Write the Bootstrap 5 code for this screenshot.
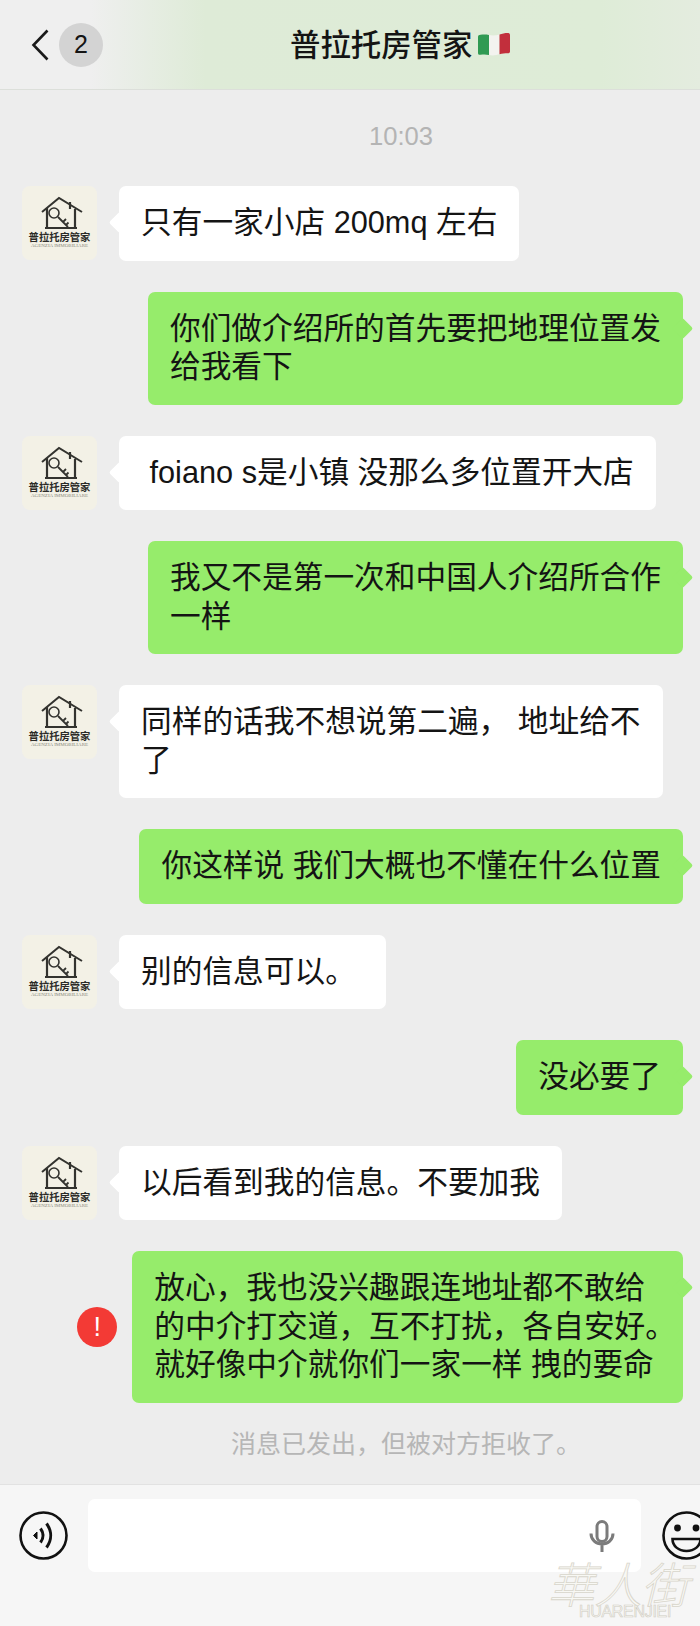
<!DOCTYPE html>
<html lang="zh">
<head>
<meta charset="UTF-8" />
<meta name="viewport" content="width=device-width, initial-scale=1.0" />
<title>普拉托房管家</title>
<link href="https://cdn.jsdelivr.net/npm/bootstrap@5.3.3/dist/css/bootstrap.min.css" rel="stylesheet" />
<style>
  html, body { height: 100%; overflow: hidden; background-color: #ededed; }
  body { font-family: "Liberation Sans", "Noto Sans CJK SC", sans-serif; color: #141414; }
  .phone { width: 700px; height: 1626px; overflow: hidden; }
  .top-bar {
    height: 90px; padding-left: 31px; flex: none;
    border-bottom: 1px solid #dcdfda;
    background: linear-gradient(90deg, #efefef 0, #efefef 90px, #deebd7 205px, #deecd7 600px, #e4ecdf 700px);
  }
  .back-count { width: 44px; height: 44px; background-color: #d3d3d3; font-size: 25px; margin-left: 10px; }
  .chat-title { font-size: 30.4px; line-height: 40px; font-weight: 500; margin-left: 187px; padding-top: 1px; }
  .flag-icon { width: 34px; height: 24px; margin-left: 5px; margin-top: -1px; }
  .chat-area { flex: 1 1 auto; min-height: 0; }
  .time-label { font-size: 25.6px; line-height: 30px; color: #b4b4b4; margin: 31px 0 35px; padding-left: 102px; }
  .msg-stack { display: flex; flex-direction: column; gap: 31px; padding: 0 17px 0 22px; }
  .head-pic { width: 75px; height: 74px; border-radius: 8px; background-color: #f3f1e6; flex: none; overflow: hidden; }
  .head-pic svg { display: block; margin: 10px 0 0 14px; }
  .head-name { font-size: 10.3px; line-height: 11px; font-weight: 700; color: #2b2b28; white-space: nowrap; margin-top: 2px; }
  .head-sub { font-family: "Liberation Serif", serif; font-size: 5px; line-height: 6px; color: #8a8a80; white-space: nowrap; }
  .bubble {
    position: relative; font-size: 30.7px; line-height: 38.5px;
    padding: 18px 22px; border-radius: 7px; white-space: nowrap;
  }
  .bubble::after {
    content: ""; position: absolute; top: 29px; width: 15px; height: 15px;
    background-color: inherit; transform: rotate(45deg); border-radius: 2px;
  }
  .bubble-in { background-color: #fff; margin-left: 22px; }
  .bubble-in::after { left: -7px; }
  .bubble-out { background-color: #96ec6b; }
  .bubble-out::after { right: -7px; }
  .hang-stop { margin-right: -15px; }
  .fail-dot {
    width: 40px; height: 40px; background-color: #f33a35; color: #fff; font-size: 27px; margin-right: 15px;
  }
  .sys-note { font-size: 25px; line-height: 30px; color: #b6b6b6; margin-top: 26px; padding-left: 112px; }
  .input-bar { height: 142px; flex: none; background-color: #f6f6f6; border-top: 1px solid #e2e2e2; padding: 14px 0 0 19px; position: relative; overflow: hidden; }
  .text-box { width: 553px; height: 73px; background-color: #fff; border-radius: 7px; margin: 0 21px 0 20px; padding-right: 26px; flex: none; }
  .bar-icon { width: 49px; height: 49px; flex: none; display: block; }
  .wm-mark { position: absolute; left: 548px; top: 72px; width: 150px; text-align: center; pointer-events: none; }
  .wm-han {
    font-family: "Noto Sans CJK SC", sans-serif; font-size: 48px; line-height: 50px; font-weight: 300; letter-spacing: -1px;
    color: #f8f8f4; -webkit-text-stroke: .8px #d8d5cb; transform: skewX(-14deg); white-space: nowrap;
  }
  .wm-lat {
    font-size: 16px; line-height: 13px; letter-spacing: -.3px; padding-left: 4px;
    color: #f8f8f4; -webkit-text-stroke: .6px #cfccc2; margin-top: -2px;
  }
</style>
</head>
<body>
<svg width="0" height="0" class="d-block position-absolute">
  <symbol id="house-logo" viewBox="0 0 48 34">
    <g fill="none" stroke="#33332f">
      <path d="M6 16 23 2l23 14" stroke-width="2"/>
      <path d="M34 6v7M11 12v20M39 13v19M9 32h32" stroke-width="2.200"/>
      <circle cx="18" cy="17" r="5" stroke-width="1.600"/>
      <path d="m22 21 10 10M27 26l3-3M30 29l2.500-2.500" stroke-width="1.800"/>
    </g>
  </symbol>
</svg>

<div class="phone d-flex flex-column">
  <header class="top-bar d-flex align-items-center">
    <svg width="18" height="32" viewBox="0 0 18 32" fill="none" stroke="#1a1a1a" stroke-width="2.6"><path d="M16.500 1.500 2.500 16l14 14.500"/></svg>
    <span class="back-count rounded-circle d-flex align-items-center justify-content-center">2</span>
    <span class="chat-title">普拉托房管家</span>
    <svg class="flag-icon" viewBox="0 0 34 24">
      <path d="M1 5C1 3.500 2 3 3.500 2.800 6.500 2.400 9 2.400 12 3V23C9 22.300 6.500 22.300 3.500 22.800 2 23 1 22.600 1 21Z" fill="#2f9a52"/>
      <path d="M12 3C15.500 3.700 19 3.500 22.500 2.500V22.300C19 23.400 15.500 23.700 12 23Z" fill="#f3f3ef"/>
      <path d="M22.500 2.500C25 1.700 28 1 30.500 1 32 1 33 1.600 33 3V19.500C33 21 32 21.300 30.500 21.300 28 21.300 25 21.500 22.500 22.300Z" fill="#c22f3c"/>
    </svg>
  </header>

  <main class="chat-area">
    <div class="time-label text-center">10:03</div>
    <div class="msg-stack">
      <div class="d-flex align-items-start">
        <div class="head-pic text-center">
          <svg width="48" height="34"><use href="#house-logo"/></svg>
          <div class="head-name">普拉托房管家</div>
          <div class="head-sub">AGENZIA IMMOBILIARE</div>
        </div>
        <div class="bubble bubble-in">只有一家小店 200mq 左右</div>
      </div>

      <div class="d-flex justify-content-end">
        <div class="bubble bubble-out">你们做介绍所的首先要把地理位置发<br>给我看下</div>
      </div>

      <div class="d-flex align-items-start">
        <div class="head-pic text-center">
          <svg width="48" height="34"><use href="#house-logo"/></svg>
          <div class="head-name">普拉托房管家</div>
          <div class="head-sub">AGENZIA IMMOBILIARE</div>
        </div>
        <div class="bubble bubble-in">&nbsp;foiano s是小镇 没那么多位置开大店</div>
      </div>

      <div class="d-flex justify-content-end">
        <div class="bubble bubble-out">我又不是第一次和中国人介绍所合作<br>一样</div>
      </div>

      <div class="d-flex align-items-start">
        <div class="head-pic text-center">
          <svg width="48" height="34"><use href="#house-logo"/></svg>
          <div class="head-name">普拉托房管家</div>
          <div class="head-sub">AGENZIA IMMOBILIARE</div>
        </div>
        <div class="bubble bubble-in">同样的话我不想说第二遍， 地址给不<br>了</div>
      </div>

      <div class="d-flex justify-content-end">
        <div class="bubble bubble-out">你这样说 我们大概也不懂在什么位置</div>
      </div>

      <div class="d-flex align-items-start">
        <div class="head-pic text-center">
          <svg width="48" height="34"><use href="#house-logo"/></svg>
          <div class="head-name">普拉托房管家</div>
          <div class="head-sub">AGENZIA IMMOBILIARE</div>
        </div>
        <div class="bubble bubble-in">别的信息可以。&nbsp;</div>
      </div>

      <div class="d-flex justify-content-end">
        <div class="bubble bubble-out">没必要了</div>
      </div>

      <div class="d-flex align-items-start">
        <div class="head-pic text-center">
          <svg width="48" height="34"><use href="#house-logo"/></svg>
          <div class="head-name">普拉托房管家</div>
          <div class="head-sub">AGENZIA IMMOBILIARE</div>
        </div>
        <div class="bubble bubble-in">以后看到我的信息。不要加我</div>
      </div>

      <div class="d-flex justify-content-end align-items-center">
        <span class="fail-dot rounded-circle d-flex align-items-center justify-content-center">!</span>
        <div class="bubble bubble-out">放心，我也没兴趣跟连地址都不敢给<br>的中介打交道，互不打扰，各自安好<span class="hang-stop">。</span><br>就好像中介就你们一家一样 拽的要命</div>
      </div>
    </div>
    <div class="sys-note text-center">消息已发出，但被对方拒收了。</div>
  </main>

  <footer class="input-bar">
    <div class="d-flex align-items-center">
      <svg class="bar-icon" viewBox="0 0 49 49" fill="none" stroke="#111" stroke-width="2.6">
        <circle cx="24.500" cy="24.500" r="23"/>
        <path d="m14.500 24.500 3.500-3.500v7Z" fill="#111" stroke-width="1"/>
        <path d="M21.500 17.500c3.300 4.500 3.300 9.500 0 14" stroke-width="3"/>
        <path d="M27.500 12.500c5.500 7.500 5.500 16.500 0 24" stroke-width="3"/>
      </svg>
      <div class="text-box d-flex align-items-center justify-content-end">
        <svg width="26" height="32" viewBox="0 0 26 32" fill="none" stroke="#7b7b7b" stroke-width="3">
          <rect x="8" y="1.500" width="10" height="20" rx="5"/>
          <path d="M2 13.500c0 6.500 5 10.500 11 10.500s11-4 11-10.500M13 24v8"/>
        </svg>
      </div>
      <svg class="bar-icon" viewBox="0 0 49 49" fill="none" stroke="#111" stroke-width="2.6">
        <circle cx="24.500" cy="24.500" r="23"/>
        <circle cx="15.500" cy="17" r="3.400" fill="#111" stroke="none"/>
        <circle cx="34" cy="17" r="3.400" fill="#111" stroke="none"/>
        <path d="M10.500 28h28c0 7-6 12-14 12s-14-5-14-12Z"/>
      </svg>
    </div>
    <div class="wm-mark">
      <div class="wm-han">華人街</div>
      <div class="wm-lat">HUARENJIEI</div>
    </div>
  </footer>
</div>
<script src="https://cdn.jsdelivr.net/npm/bootstrap@5.3.3/dist/js/bootstrap.bundle.min.js"></script>
</body>
</html>
